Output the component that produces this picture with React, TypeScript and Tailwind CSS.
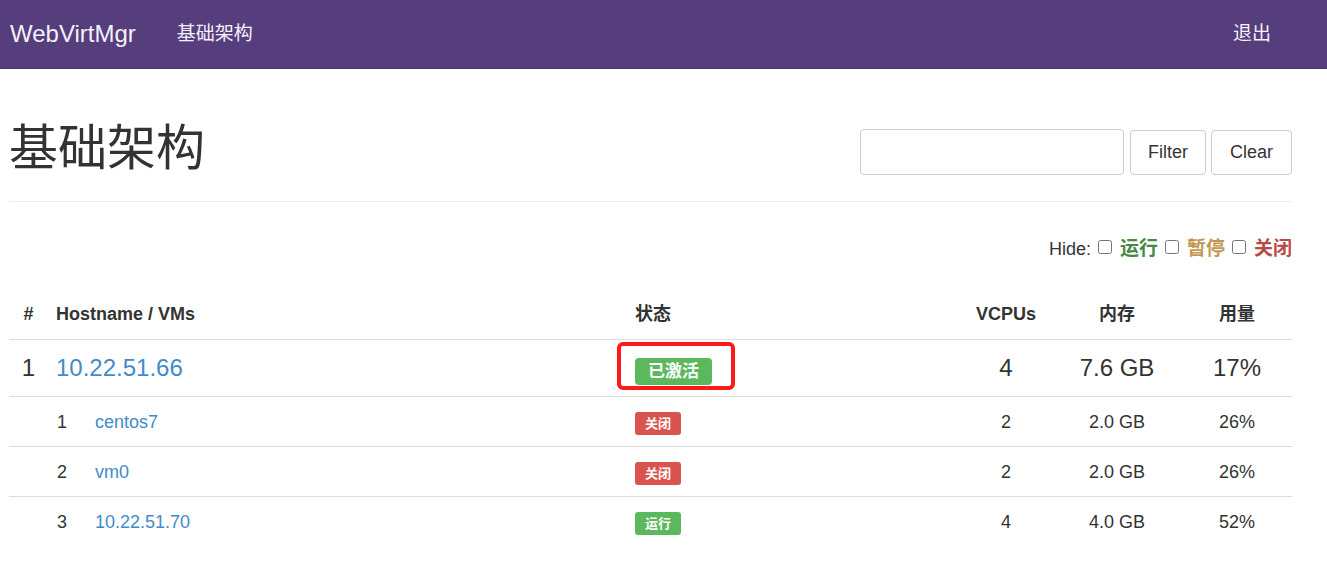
import React from "react";

const font = "font-['Liberation_Sans','Noto_Sans_CJK_SC',sans-serif]";

type Vm = { id: number; name: string; status: "off" | "run"; vcpu: number; mem: string; usage: string };

const vms: Vm[] = [
  { id: 1, name: "centos7", status: "off", vcpu: 2, mem: "2.0 GB", usage: "26%" },
  { id: 2, name: "vm0", status: "off", vcpu: 2, mem: "2.0 GB", usage: "26%" },
  { id: 3, name: "10.22.51.70", status: "run", vcpu: 4, mem: "4.0 GB", usage: "52%" },
];

const cols = "grid grid-cols-[39px_579px_333px_92px_130px_110px] items-center";

function Navbar() {
  return (
    <nav className="h-[69px] bg-[#563d7c] border-b border-[#463265] flex items-center px-[10px] text-white">
      <span className="text-[24px] text-[#f4f0fa]">WebVirtMgr</span>
      <a className="ml-[41px] text-[19px] text-[#f4f0fa]">基础架构</a>
      <a className="ml-auto mr-[46px] text-[19px] text-[#f4f0fa]">退出</a>
    </nav>
  );
}

function StatusBadge({ status }: { status: Vm["status"] }) {
  return status === "off" ? (
    <span className="inline-block bg-[#d9534f] text-white text-[13px] font-bold leading-[23px] px-[10px] rounded-[3px]">关闭</span>
  ) : (
    <span className="inline-block bg-[#5cb85c] text-white text-[13px] font-bold leading-[23px] px-[10px] rounded-[3px]">运行</span>
  );
}

export default function App() {
  return (
    <div className={`${font} min-h-screen bg-white text-[#333]`}>
      <Navbar />
      <div className="pl-[9px] pr-[35px]">
        <div className="mt-[48px] flex items-center justify-between border-b border-[#eee] pb-[22px]">
          <h1 className="text-[49px] leading-[62px] text-[#333]">基础架构</h1>
          <div className="flex items-center mt-[8px]">
            <input className="w-[264px] h-[46px] border border-[#ccc] rounded-[4px] px-3 text-[18px]" />
            <button className="ml-[6px] h-[45px] px-[17px] border border-[#ccc] rounded-[4px] text-[18px] bg-white">Filter</button>
            <button className="ml-[5px] h-[45px] px-[18px] border border-[#ccc] rounded-[4px] text-[18px] bg-white">Clear</button>
          </div>
        </div>

        <div className="mt-[34px] flex items-center justify-end text-[18px] leading-[26px]">
          <span>Hide:</span>
          <input type="checkbox" className="ml-[7px] w-[14px] h-[14px] mb-[5px]" />
          <span className="ml-[8px] text-[19px] font-bold text-[#468847]">运行</span>
          <input type="checkbox" className="ml-[7px] w-[14px] h-[14px] mb-[5px]" />
          <span className="ml-[8px] text-[19px] font-bold text-[#c09853]">暂停</span>
          <input type="checkbox" className="ml-[7px] w-[14px] h-[14px] mb-[5px]" />
          <span className="ml-[8px] text-[19px] font-bold text-[#b94a48]">关闭</span>
        </div>

        <div className="mt-[28px]">
          <div className={`${cols} h-[50px] border-b border-[#ddd] text-[18px] font-bold`}>
            <div className="text-center">#</div>
            <div className="pl-[8px]">Hostname / VMs</div>
            <div className="pl-[8px]">状态</div>
            <div className="text-center">VCPUs</div>
            <div className="text-center">内存</div>
            <div className="text-center">用量</div>
          </div>

          <div className={`${cols} h-[57px] border-b border-[#ddd] text-[24px]`}>
            <div className="text-center">1</div>
            <div className="pl-[8px]"><a className="text-[#428bca]">10.22.51.66</a></div>
            <div className="pl-[8px]">
              <span className="relative inline-block align-middle">
                <span className="inline-block bg-[#5cb85c] text-white text-[17px] font-bold leading-[27px] px-[13px] rounded-[4px]">已激活</span>
                <span className="absolute -left-[18px] -top-[9px] w-[118px] h-[48px] border-4 border-[#ff1a1a] rounded-[6px]" />
              </span>
            </div>
            <div className="text-center">4</div>
            <div className="text-center">7.6 GB</div>
            <div className="text-center">17%</div>
          </div>

          {vms.map((vm, i) => (
            <div
              key={vm.id}
              className={`${cols} h-[50px] text-[18px] border-b ${i < vms.length - 1 ? "border-[#ddd]" : "border-transparent"}`}
            >
              <div />
              <div className="pl-[9px] flex items-center pt-[2px]">
                <span className="w-[38px]">{vm.id}</span>
                <a className="text-[#428bca]">{vm.name}</a>
              </div>
              <div className="pl-[8px] flex items-center pt-[4px]">
                <StatusBadge status={vm.status} />
              </div>
              <div className="text-center pt-[2px]">{vm.vcpu}</div>
              <div className="text-center pt-[2px]">{vm.mem}</div>
              <div className="text-center pt-[2px]">{vm.usage}</div>
            </div>
          ))}
        </div>
      </div>
    </div>
  );
}
